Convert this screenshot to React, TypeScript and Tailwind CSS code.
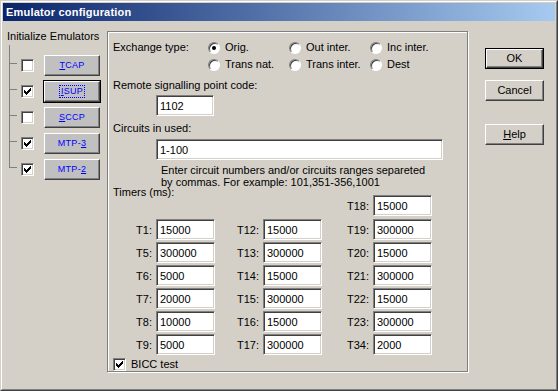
import type { ReactNode } from "react";

const sunken =
  "bg-white border border-t-[#808080] border-l-[#808080] border-r-white border-b-white shadow-[inset_1px_1px_0_#404040,inset_-1px_-1px_0_#d4d0c8]";
const raised =
  "border border-t-white border-l-white border-r-[#404040] border-b-[#404040] shadow-[inset_-1px_-1px_0_#808080]";

function Check() {
  return (
    <svg width="7" height="7" viewBox="0 0 7 7" shapeRendering="crispEdges">
      <path d="M6 0h1v3h-1v1h-1v1h-1v1h-1v1h-1v-1h-1v-1h-1v-3h1v1h1v1h1v-1h1v-1h1z" fill="#000" />
    </svg>
  );
}

function CheckBox({ checked }: { checked?: boolean }) {
  return (
    <div className={`flex h-[13px] w-[13px] shrink-0 items-center justify-center ${sunken}`}>
      {checked ? <Check /> : null}
    </div>
  );
}

function Radio({ label, on }: { label: string; on?: boolean }) {
  return (
    <div className="flex h-[17px] items-center gap-[5px]">
      <div className="flex h-[12px] w-[12px] items-center justify-center rounded-full border border-t-[#808080] border-l-[#808080] border-r-white border-b-white bg-white shadow-[inset_1px_1px_0_#404040]">
        {on ? <div className="h-[4px] w-[4px] rounded-full bg-black" /> : null}
      </div>
      <span className="leading-[13px]">{label}</span>
    </div>
  );
}

function Field({ value, className = "" }: { value: string; className?: string }) {
  return (
    <input
      defaultValue={value}
      className={`h-[21px] pl-[3px] text-[11px] leading-[12px] text-black outline-none ${sunken} ${className}`}
    />
  );
}

function Timer({ name, value }: { name: string; value: string }) {
  return (
    <div className="flex items-center justify-end gap-[4px]">
      <span className="leading-[12px]">{name}:</span>
      <Field value={value} className="w-[59px]" />
    </div>
  );
}

function EmuRow({
  checked,
  focus,
  last,
  children,
}: {
  checked?: boolean;
  focus?: boolean;
  last?: boolean;
  children: ReactNode;
}) {
  return (
    <div className="flex h-[26px] items-center">
      <div className="flex h-full w-[8px] flex-col">
        <div className="h-[12px] border-b border-l border-[#808080]" />
        {!last ? <div className="flex-1 border-l border-[#808080]" /> : null}
      </div>
      <div className="ml-[4px]">
        <CheckBox checked={checked} />
      </div>
      <div
        className={`ml-[10px] flex h-[21px] w-[56px] items-center justify-center bg-[#c0c0c0] ${
          focus ? "outline outline-1 outline-black" : ""
        } ${raised}`}
      >
        <span
          className={`text-[9px] leading-[11px] tracking-[0.3px] text-[#0000ff] ${
            focus ? "border border-dotted border-[#0000ff] px-[1px]" : ""
          }`}
        >
          {children}
        </span>
      </div>
    </div>
  );
}

const col1 = [
  ["T1", "15000"],
  ["T5", "300000"],
  ["T6", "5000"],
  ["T7", "20000"],
  ["T8", "10000"],
  ["T9", "5000"],
];
const col2 = [
  ["T12", "15000"],
  ["T13", "300000"],
  ["T14", "15000"],
  ["T15", "300000"],
  ["T16", "15000"],
  ["T17", "300000"],
];
const col3 = [
  ["T19", "300000"],
  ["T20", "15000"],
  ["T21", "300000"],
  ["T22", "15000"],
  ["T23", "300000"],
  ["T34", "2000"],
];

export default function App() {
  return (
    <div className="h-[391px] w-[558px] border border-t-[#d4d0c8] border-l-[#d4d0c8] border-r-[#404040] border-b-[#404040] bg-[#d4d0c8] font-['Liberation_Sans',Arial,sans-serif] text-[11px] text-black">
      <div className="flex h-full flex-col border border-t-white border-l-white border-r-[#808080] border-b-[#808080] p-px">
        <div className="flex h-[18px] shrink-0 items-center bg-[linear-gradient(to_right,#0a246a,#a6caf0)] pl-[3px]">
          <span className="text-[11px] font-bold leading-[13px] tracking-[0.2px] text-white">
            Emulator configuration
          </span>
        </div>

        <div className="flex flex-1">
          {/* left: emulators */}
          <div className="w-[104px] shrink-0 pt-[9px]">
            <div className="pl-[4px] leading-[13px]">Initialize Emulators</div>
            <div className="ml-[6px] mt-[2px]">
              <div className="h-[7px] border-l border-[#808080]" />
              <EmuRow>
                <u>T</u>CAP
              </EmuRow>
              <EmuRow checked focus>
                <u>I</u>SUP
              </EmuRow>
              <EmuRow>
                <u>S</u>CCP
              </EmuRow>
              <EmuRow checked>
                MTP-<u>3</u>
              </EmuRow>
              <EmuRow checked last>
                MTP-<u>2</u>
              </EmuRow>
            </div>
          </div>

          {/* group box */}
          <div className="mt-[10px] h-[341px] w-[361px] shrink-0 border border-[#808080] pl-[5px] pt-[7px] shadow-[inset_1px_1px_0_#fff,1px_1px_0_#fff]">
            <div className="flex">
              <div className="w-[95px] pt-[2px] leading-[13px]">Exchange type:</div>
              <div className="grid grid-cols-[81px_81px_81px]">
                <Radio label="Orig." on />
                <Radio label="Out inter." />
                <Radio label="Inc inter." />
                <Radio label="Trans nat." />
                <Radio label="Trans inter." />
                <Radio label="Dest" />
              </div>
            </div>

            <div className="mt-[6px] leading-[13px]">Remote signalling point code:</div>
            <Field value="1102" className="ml-[43px] mt-[3px] w-[58px]" />

            <div className="mt-[6px] leading-[13px]">Circuits in used:</div>
            <Field value="1-100" className="ml-[43px] mt-[4px] w-[287px]" />

            <div className="ml-[48px] mt-[4px] leading-[12px]">
              Enter circuit numbers and/or circuits ranges separeted
              <br />
              by commas. For example: 101,351-356,1001
            </div>

            <div className="-mt-[2px] flex w-[319px] items-start justify-between">
              <span className="leading-[12px]">Timers (ms):</span>
              <div className="mt-[9px]">
                <Timer name="T18" value="15000" />
              </div>
            </div>

            <div className="mt-[3px] grid w-[319px] grid-cols-[102px_107px_110px] gap-y-[2px]">
              {col1.map((_, i) => [
                <Timer key={`a${i}`} name={col1[i][0]} value={col1[i][1]} />,
                <Timer key={`b${i}`} name={col2[i][0]} value={col2[i][1]} />,
                <Timer key={`c${i}`} name={col3[i][0]} value={col3[i][1]} />,
              ])}
            </div>

            <div className="mt-[3px] flex items-center gap-[5px]">
              <CheckBox checked />
              <span className="leading-[13px]">BICC test</span>
            </div>
          </div>

          {/* right: buttons */}
          <div className="flex flex-col pl-[17px] pt-[27px]">
            <div className="border border-black">
              <div className={`flex h-[19px] w-[57px] items-center justify-center bg-[#d4d0c8] ${raised}`}>OK</div>
            </div>
            <div className={`mt-[11px] flex h-[21px] w-[59px] items-center justify-center bg-[#d4d0c8] ${raised}`}>
              Cancel
            </div>
            <div className={`mt-[23px] flex h-[21px] w-[59px] items-center justify-center bg-[#d4d0c8] ${raised}`}>
              <span>
                <u>H</u>elp
              </span>
            </div>
          </div>
        </div>
      </div>
    </div>
  );
}
